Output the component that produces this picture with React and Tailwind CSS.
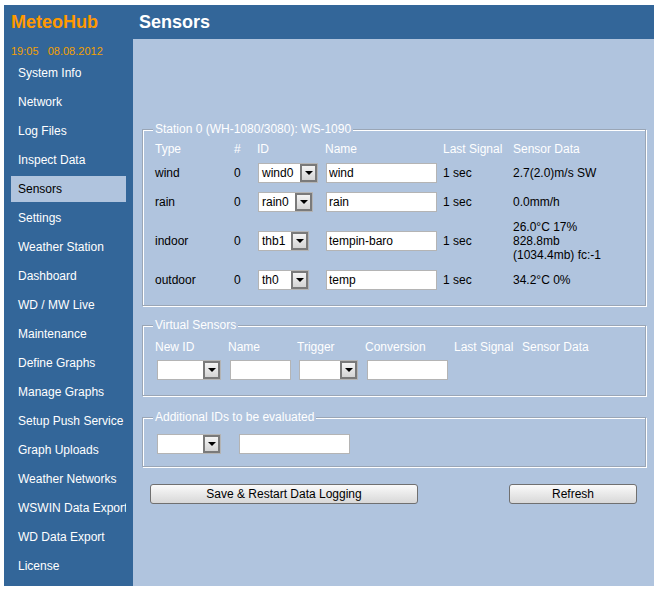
import { useState } from "react";

const menu = [
  "System Info",
  "Network",
  "Log Files",
  "Inspect Data",
  "Sensors",
  "Settings",
  "Weather Station",
  "Dashboard",
  "WD / MW Live",
  "Maintenance",
  "Define Graphs",
  "Manage Graphs",
  "Setup Push Service",
  "Graph Uploads",
  "Weather Networks",
  "WSWIN Data Export",
  "WD Data Export",
  "License",
];

const sensors = [
  { type: "wind", id: "wind0", idw: "w-[60px]", name: "wind", data: ["2.7(2.0)m/s SW"], h: "h-[24px]" },
  { type: "rain", id: "rain0", idw: "w-[55px]", name: "rain", data: ["0.0mm/h"], h: "h-[24px]" },
  { type: "indoor", id: "thb1", idw: "w-[51px]", name: "tempin-baro", data: ["26.0°C 17%", "828.8mb", "(1034.4mb) fc:-1"], h: "h-[44px]" },
  { type: "outdoor", id: "th0", idw: "w-[51px]", name: "temp", data: ["34.2°C 0%"], h: "h-[24px]" },
];

function Select({ className, value }) {
  return (
    <div className={`flex h-[20px] bg-white border border-[#b4b4b4] ${className}`}>
      <span className="flex-1 pl-[3px] leading-[18px] text-black whitespace-nowrap overflow-hidden">{value}</span>
      <span className="w-[17px] h-full border-2 border-[#7a7a7a] bg-linear-to-b from-[#f4f4f4] to-[#d4d4d4] flex items-center justify-center">
        <span className="w-0 h-0 border-l-[4px] border-r-[4px] border-t-[4px] border-l-transparent border-r-transparent border-t-black" />
      </span>
    </div>
  );
}

function TextBox({ className, value, onChange }) {
  return (
    <input
      value={value}
      onChange={onChange}
      className={`h-[20px] bg-white border border-[#b4b4b4] px-[2px] text-[12px] text-black outline-none ${className}`}
    />
  );
}

function Box({ title, className, children }) {
  return (
    <fieldset className={`ml-[9px] mr-[8px] px-[12px] border border-[#9aa6b6] shadow-[inset_1px_1px_0_#ffffff,1px_1px_0_#ffffff] ${className}`}>
      <legend className="ml-[-2px] px-[2px] leading-[14px] text-white bg-[#b0c4de]">{title}</legend>
      {children}
    </fieldset>
  );
}

export default function App() {
  const [names, setNames] = useState({ 0: "wind", 1: "rain", 2: "tempin-baro", 3: "temp" });
  const [active, setActive] = useState("Sensors");

  const changeName = (i) => (e) => {
    setNames({ ...names, [i]: e.target.value });
  };

  return (
    <div className="w-[658px] h-[591px] bg-white pt-[5px] px-[4px] text-[12px]" style={{ fontFamily: '"Liberation Sans", Arial, sans-serif' }}>
      <div className="flex h-[581px]">
        <div className="w-[129px] bg-[#336699] flex flex-col">
          <div className="h-[34px] pl-[7px] flex items-center text-[18px] font-bold text-[#ff9900]">MeteoHub</div>
          <div className="h-[21px] pl-[7px] pt-[6px] leading-[13px] text-[11px] text-[#f2a000] whitespace-pre">19:05   08.08.2012</div>
          {menu.map((m) => (
            <div
              key={m}
              onClick={() => setActive(m)}
              className={`ml-[7px] w-[115px] h-[26px] mb-[3px] pl-[7px] flex items-center whitespace-nowrap overflow-hidden cursor-pointer ${
                active === m ? "bg-[#b0c4de] text-black" : "text-white"
              }`}
            >
              {m}
            </div>
          ))}
        </div>

        <div className="flex-1 flex flex-col">
          <div className="h-[34px] bg-[#336699] pl-[6px] flex items-center text-[18px] font-bold text-white">Sensors</div>
          <div className="flex-1 bg-[#b0c4de] pt-[83px]">
            <Box title="Station 0 (WH-1080/3080): WS-1090" className="pt-[1px] pb-[13px]">
              <div className="flex h-[24px] items-center text-white">
                <span className="w-[79px]">Type</span>
                <span className="w-[23px]">#</span>
                <span className="w-[68px]">ID</span>
                <span className="w-[118px]">Name</span>
                <span className="w-[70px]">Last Signal</span>
                <span>Sensor Data</span>
              </div>
              <div className="flex flex-col gap-[5px]">
                {sensors.map((s, i) => (
                  <div key={s.type} className={`flex items-center text-black ${s.h}`}>
                    <span className="w-[79px]">{s.type}</span>
                    <span className="w-[23px]">0</span>
                    <span className="w-[68px] pl-[1px]">
                      <Select className={s.idw} value={s.id} />
                    </span>
                    <span className="w-[118px] pl-[1px]">
                      <TextBox className="w-[111px]" value={names[i]} onChange={changeName(i)} />
                    </span>
                    <span className="w-[70px]">1 sec</span>
                    <span className="leading-[14px]">
                      {s.data.map((d) => (
                        <div key={d}>{d}</div>
                      ))}
                    </span>
                  </div>
                ))}
              </div>
            </Box>

            <Box title="Virtual Sensors" className="mt-[12px] pt-[3px] pb-[15px]">
              <div className="flex h-[24px] items-center text-white">
                <span className="w-[73px]">New ID</span>
                <span className="w-[69px]">Name</span>
                <span className="w-[68px]">Trigger</span>
                <span className="w-[89px]">Conversion</span>
                <span className="w-[68px]">Last Signal</span>
                <span>Sensor Data</span>
              </div>
              <div className="flex items-center h-[20px] mt-[1px]">
                <span className="w-[73px] pl-[2px]">
                  <Select className="w-[64px] h-[19px]" value="" />
                </span>
                <span className="w-[69px] pl-[2px]">
                  <TextBox className="w-[61px]" value="" onChange={() => {}} />
                </span>
                <span className="w-[68px] pl-[2px]">
                  <Select className="w-[59px] h-[19px]" value="" />
                </span>
                <span className="w-[89px] pl-[2px]">
                  <TextBox className="w-[81px]" value="" onChange={() => {}} />
                </span>
              </div>
            </Box>

            <Box title="Additional IDs to be evaluated" className="mt-[14px] pt-[10px] pb-[12px]">
              <div className="flex items-center h-[20px]">
                <span className="w-[84px] pl-[2px]">
                  <Select className="w-[64px] h-[19px]" value="" />
                </span>
                <TextBox className="w-[111px]" value="" onChange={() => {}} />
              </div>
            </Box>

            <div className="flex justify-between mt-[17px] pl-[17px] pr-[17px]">
              <button className="w-[268px] h-[20px] rounded-[3px] border border-[#707070] bg-linear-to-b from-[#fafafa] to-[#d8d8d8] text-[12px] text-black">
                Save &amp; Restart Data Logging
              </button>
              <button className="w-[128px] h-[20px] rounded-[3px] border border-[#707070] bg-linear-to-b from-[#fafafa] to-[#d8d8d8] text-[12px] text-black">
                Refresh
              </button>
            </div>
          </div>
        </div>
      </div>
    </div>
  );
}
